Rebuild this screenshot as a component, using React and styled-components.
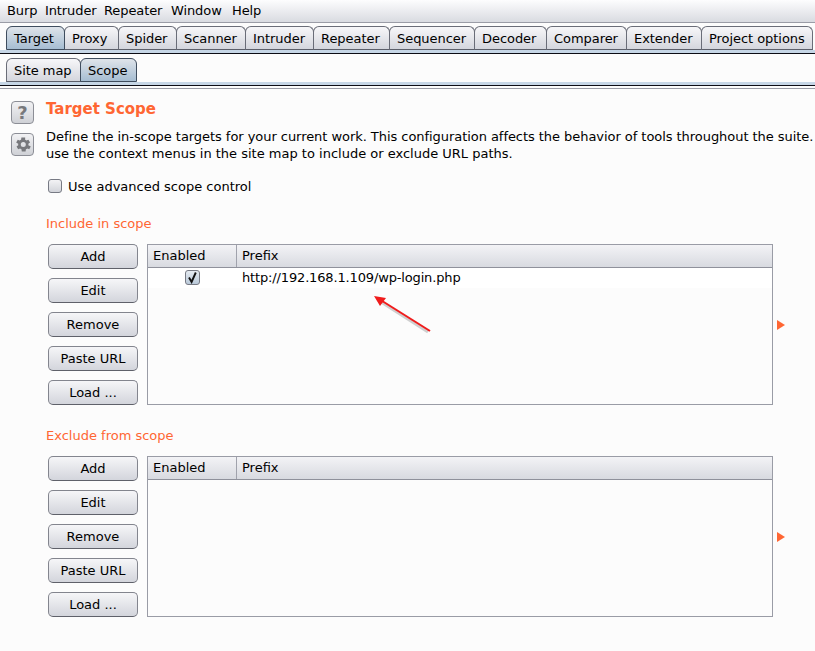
import React from 'react';
import styled, { createGlobalStyle } from 'styled-components';

const GlobalStyle = createGlobalStyle`
  html, body {
    margin: 0;
    padding: 0;
    background: #fcfcfc;
  }
  body {
    font-family: 'DejaVu Sans', sans-serif;
    font-size: 13px;
    color: #000;
  }
`;

const Page = styled.div`
  position: relative;
  width: 815px;
  height: 651px;
  overflow: hidden;
  background: #fcfcfc;
`;

const MenuBar = styled.div`
  display: flex;
  align-items: center;
  height: 22px;
  padding-left: 7px;
  background: linear-gradient(#fdfdfe, #d9dbe1);
  border-bottom: 1px solid #9a9ca6;
`;

const MenuItem = styled.span`
  width: ${(p) => p.$w}px;
  line-height: 20px;
  letter-spacing: -0.1px;
`;

const TabRow = styled.div`
  display: flex;
  align-items: flex-end;
  height: 24px;
  margin-top: ${(p) => p.$top}px;
  padding-left: 6px;
`;

const Tab = styled.div`
  box-sizing: border-box;
  height: 24px;
  width: ${(p) => p.$w}px;
  margin-right: -1px;
  padding-left: 7px;
  line-height: 24px;
  letter-spacing: -0.05px;
  white-space: nowrap;
  border: 1px solid #6a6d78;
  border-bottom: 1px solid ${(p) => (p.$active ? '#a8bed2' : '#5c5f6a')};
  border-radius: 6px 6px 0 0;
  background: ${(p) =>
    p.$active
      ? 'linear-gradient(#dfe4ea, #a6bdd2)'
      : 'linear-gradient(#f7f7f9, #d4d6dd)'};
  ${(p) => p.$active && 'border-color: #3f4d5e; position: relative; z-index: 1;'}
`;

const TabBand = styled.div`
  height: 3px;
  background: #c6d6e6;
  border-bottom: 1px solid #0c0c14;
`;

const Rule = styled.div`
  height: 1px;
  margin-top: 2px;
  background: #9a9ca6;
`;

const Body = styled.div`
  display: flex;
  padding: 12px 0 0 11px;
`;

const IconColumn = styled.div`
  display: flex;
  flex-direction: column;
  gap: 9px;
  width: 35px;
  flex: none;
`;

const IconButton = styled.div`
  display: flex;
  align-items: center;
  justify-content: center;
  box-sizing: border-box;
  width: 23px;
  height: 23px;
  border: 1px solid #8c8e96;
  border-radius: 4px;
  background: linear-gradient(#f2f2f4, #cfd1d6);
  color: #77787c;
  font-weight: bold;
  font-size: 18px;
`;

const Content = styled.div`
  flex: 1;
  min-width: 0;
`;

const Heading = styled.div`
  height: 18px;
  margin-top: -1px;
  color: #ff6633;
  font-size: 15px;
  font-weight: bold;
  line-height: 18px;
`;

const Description = styled.div`
  margin-top: 10px;
`;

const DescriptionLine = styled.div`
  line-height: 17px;
  white-space: nowrap;
  letter-spacing: ${(p) => (p.$tight ? '-0.05px' : '0')};
`;

const CheckRow = styled.label`
  display: flex;
  align-items: center;
  gap: 6px;
  margin: 15px 0 0 2px;
  height: 18px;
`;

const CheckBox = styled.span`
  display: flex;
  align-items: center;
  justify-content: center;
  box-sizing: border-box;
  width: ${(p) => (p.$small ? 15 : 14)}px;
  height: ${(p) => (p.$small ? 15 : 14)}px;
  border: 1px solid #777a84;
  border-radius: 3px;
  background: ${(p) =>
    p.$checked
      ? 'linear-gradient(#e6ebf1, #b9c9d9)'
      : 'linear-gradient(#f3f3f5, #d2d4da)'};
`;

const SectionLabel = styled.div`
  margin-top: ${(p) => p.$top}px;
  color: #ff6633;
  line-height: 18px;
`;

const Section = styled.div`
  display: flex;
  align-items: flex-start;
  margin: 11px 0 0 2px;
`;

const ButtonColumn = styled.div`
  display: flex;
  flex-direction: column;
  gap: 9px;
  width: 90px;
  margin-right: 9px;
  flex: none;
`;

const Button = styled.div`
  box-sizing: border-box;
  height: 25px;
  text-align: center;
  line-height: 23px;
  border: 1px solid #83858e;
  border-bottom-color: #5f616a;
  border-radius: 5px;
  background: linear-gradient(#f6f6f8, #d3d5dc);
`;

const Table = styled.div`
  box-sizing: border-box;
  width: 626px;
  height: 161px;
  border: 1px solid #9a9ca6;
  flex: none;
`;

const TableHead = styled.div`
  display: grid;
  grid-template-columns: 88px 1fr;
  height: 23px;
  border-bottom: 1px solid #8f919b;
  box-sizing: border-box;
  background: linear-gradient(#f3f3f6, #d8dae0);
`;

const HeadCell = styled.div`
  padding-left: 5px;
  line-height: 21px;
  & + & {
    border-left: 1px solid #a0a2ac;
  }
`;

const TableRow = styled.div`
  display: grid;
  grid-template-columns: 88px 1fr;
  align-items: center;
  box-sizing: border-box;
  height: 20px;
  padding-bottom: 2px;
  background: #ffffff;
`;

const EnabledCell = styled.div`
  display: flex;
  justify-content: center;
`;

const PrefixCell = styled.div`
  padding-left: 6px;
  letter-spacing: -0.15px;
`;

const ExpandMark = styled.div`
  align-self: center;
  width: 0;
  height: 0;
  margin-left: 4px;
  border-left: 8px solid #ff6633;
  border-top: 5px solid transparent;
  border-bottom: 5px solid transparent;
`;

const Annotation = styled.svg`
  position: absolute;
  left: 365px;
  top: 290px;
`;

const menus = [
  ['Burp', 38],
  ['Intruder', 59],
  ['Repeater', 67],
  ['Window', 61],
  ['Help', 40],
];

const topTabs = [
  ['Target', 59],
  ['Proxy', 55],
  ['Spider', 59],
  ['Scanner', 70],
  ['Intruder', 69],
  ['Repeater', 77],
  ['Sequencer', 86],
  ['Decoder', 73],
  ['Comparer', 81],
  ['Extender', 76],
  ['Project options', 112],
];

const actions = ['Add', 'Edit', 'Remove', 'Paste URL', 'Load ...'];

function ScopeSection({ children }) {
  return (
    <Section>
      <ButtonColumn>
        {actions.map((a) => (
          <Button key={a}>{a}</Button>
        ))}
      </ButtonColumn>
      <Table>
        <TableHead>
          <HeadCell>Enabled</HeadCell>
          <HeadCell>Prefix</HeadCell>
        </TableHead>
        {children}
      </Table>
      <ExpandMark />
    </Section>
  );
}

export default function App() {
  return (
    <Page>
      <GlobalStyle />
      <MenuBar>
        {menus.map(([m, w]) => (
          <MenuItem key={m} $w={w}>
            {m}
          </MenuItem>
        ))}
      </MenuBar>
      <TabRow $top={3}>
        {topTabs.map(([t, w], i) => (
          <Tab key={t} $w={w} $active={i === 0}>
            {t}
          </Tab>
        ))}
      </TabRow>
      <TabBand />
      <TabRow $top={4}>
        <Tab $w={75}>Site map</Tab>
        <Tab $w={57} $active>
          Scope
        </Tab>
      </TabRow>
      <TabBand />
      <Rule />
      <Body>
        <IconColumn>
          <IconButton>?</IconButton>
          <IconButton>
            <svg width="19" height="19" viewBox="0 0 24 24" fill="#77787c">
              <path fillRule="evenodd" d="M19.4 13a7.6 7.6 0 0 0 0-2l2.1-1.6-2-3.5-2.5 1a7.6 7.6 0 0 0-1.7-1L15.4 3.2h-4.8l-.4 2.7a7.6 7.6 0 0 0-1.7 1l-2.5-1-2 3.5L6.6 11a7.6 7.6 0 0 0 0 2l-2.1 1.6 2 3.5 2.5-1a7.6 7.6 0 0 0 1.7 1l.4 2.7h4.8l.4-2.7a7.6 7.6 0 0 0 1.7-1l2.5 1 2-3.5zM13 15.2a3.2 3.2 0 1 1 0-6.4 3.2 3.2 0 0 1 0 6.4z" />
            </svg>
          </IconButton>
        </IconColumn>
        <Content>
          <Heading>Target Scope</Heading>
          <Description>
            <DescriptionLine $tight>
              Define the in-scope targets for your current work. This configuration affects the behavior of tools throughout the suite.
            </DescriptionLine>
            <DescriptionLine>use the context menus in the site map to include or exclude URL paths.</DescriptionLine>
          </Description>
          <CheckRow>
            <CheckBox />
            Use advanced scope control
          </CheckRow>
          <SectionLabel $top={20}>Include in scope</SectionLabel>
          <ScopeSection>
            <TableRow>
              <EnabledCell>
                <CheckBox $small $checked>
                  <svg width="13" height="13" viewBox="0 0 13 13">
                    <path d="M3 6.5 L5.6 11 L9.8 1.5" fill="none" stroke="#111" strokeWidth="1.9" />
                  </svg>
                </CheckBox>
              </EnabledCell>
              <PrefixCell>http://192.168.1.109/wp-login.php</PrefixCell>
            </TableRow>
          </ScopeSection>
          <SectionLabel $top={22}>Exclude from scope</SectionLabel>
          <ScopeSection />
        </Content>
      </Body>
      <Annotation width="75" height="50" viewBox="0 0 75 50">
        <path d="M13 10 L63 42" stroke="#999" strokeOpacity="0.45" strokeWidth="3" fill="none" />
        <path d="M65 41 L14 9" stroke="#f01c1c" strokeWidth="2" fill="none" />
        <path d="M9 6 L21 8 L15 16 Z" fill="#f01c1c" />
      </Annotation>
    </Page>
  );
}
